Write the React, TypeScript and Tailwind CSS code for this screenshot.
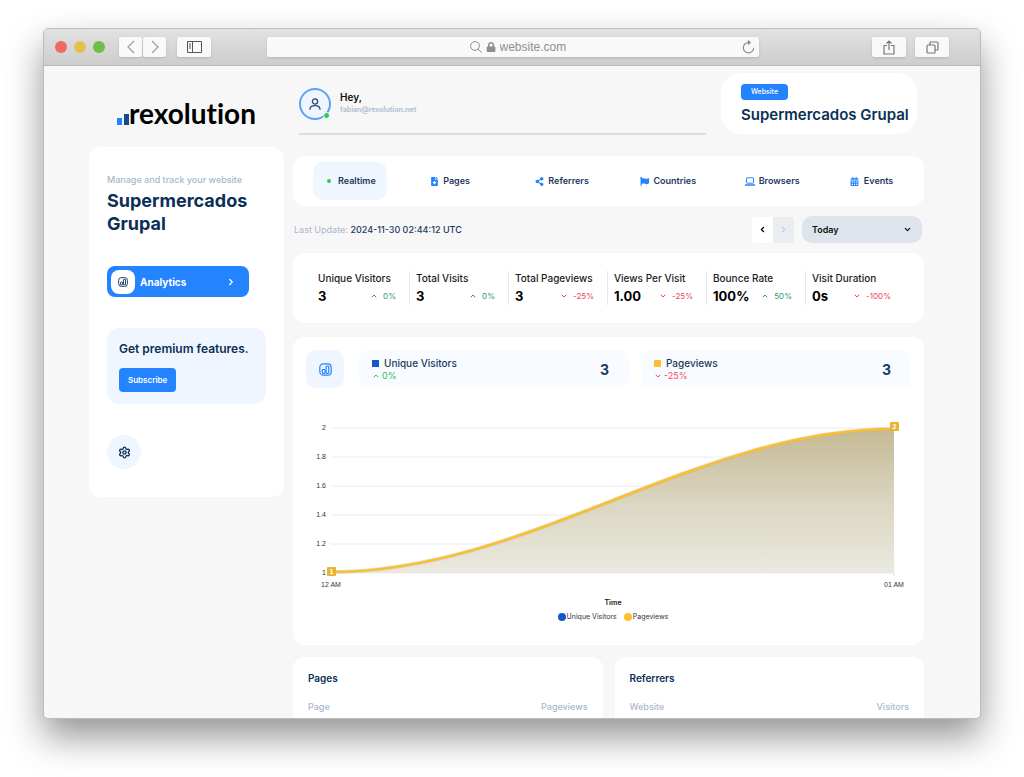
import React, { useState } from "react";
import { ChevronDown, ChevronLeft, ChevronRight, ChevronUp, Settings } from "lucide-react";
import { FaCalendarAlt, FaFileMedical, FaFlag, FaLock, FaShareAlt } from "react-icons/fa";

type Trend = { up: boolean; value: string };
type Stat = { label: string; value: string; trend: Trend };

const TABS = [
  { id: "realtime", label: "Realtime", icon: <span className="h-1 w-1 rounded-full bg-[#34c759]" /> },
  { id: "pages", label: "Pages", icon: <FaFileMedical size={9} /> },
  { id: "referrers", label: "Referrers", icon: <FaShareAlt size={9} /> },
  { id: "countries", label: "Countries", icon: <FlagIcon /> },
  { id: "browsers", label: "Browsers", icon: <LaptopIcon /> },
  { id: "events", label: "Events", icon: <FaCalendarAlt size={9} /> },
];

const STATS: Stat[] = [
  { label: "Unique Visitors", value: "3", trend: { up: true, value: "0%" } },
  { label: "Total Visits", value: "3", trend: { up: true, value: "0%" } },
  { label: "Total Pageviews", value: "3", trend: { up: false, value: "-25%" } },
  { label: "Views Per Visit", value: "1.00", trend: { up: false, value: "-25%" } },
  { label: "Bounce Rate", value: "100%", trend: { up: true, value: "50%" } },
  { label: "Visit Duration", value: "0s", trend: { up: false, value: "-100%" } },
];

const Y_TICKS = ["2", "1.8", "1.6", "1.4", "1.2", "1"];

function FlagIcon() {
  return <FaFlag size={9} />;
}

function LaptopIcon() {
  return (
    <svg width="10" height="9" viewBox="0 0 10 9" fill="none" stroke="currentColor" aria-hidden="true">
      <rect x="1.5" y=".8" width="7" height="5.400" rx=".5" />
      <path d="M0 8h10" strokeWidth="1.400" />
    </svg>
  );
}

function BarsIcon({ size }: { size: number }) {
  return (
    <svg width={size} height={size} viewBox="0 0 24 24" fill="none" stroke="currentColor" strokeWidth="2.200" strokeLinejoin="round" aria-hidden="true">
      <rect x="1.5" y="1.5" width="21" height="21" rx="6.5" />
      <rect x="6" y="12" width="5" height="7" rx="1.5" />
      <rect x="13" y="5.5" width="5" height="13.5" rx="1.5" />
    </svg>
  );
}

function TitleBar() {
  return (
    <header className="flex h-[37px] items-center border-b border-[#b9b9b9] bg-linear-to-b from-[#e2e2e2] to-[#cdcdcd] pl-[11px] pr-[31px]">
      <div className="flex gap-[7px]">
        <span className="h-3 w-3 rounded-full bg-[#ee6a5e]" />
        <span className="h-3 w-3 rounded-full bg-[#e2c04c]" />
        <span className="h-3 w-3 rounded-full bg-[#70bf45]" />
      </div>
      <div className="ml-[14px] flex gap-px text-[#a0a0a0]">
        <button type="button" aria-label="Back" className="flex h-5 w-[23px] items-center justify-center rounded-[2px] bg-[#f9f9f9] shadow-sm">
          <svg width="8" height="14" viewBox="0 0 8 14" fill="none" stroke="currentColor" strokeWidth="1.3"><path d="M7 1 1 7l6 6" /></svg>
        </button>
        <button type="button" aria-label="Forward" className="flex h-5 w-[23px] items-center justify-center rounded-[2px] bg-[#f9f9f9] shadow-sm">
          <svg width="8" height="14" viewBox="0 0 8 14" fill="none" stroke="currentColor" strokeWidth="1.3"><path d="m1 1 6 6-6 6" /></svg>
        </button>
      </div>
      <button type="button" aria-label="Show sidebar" className="ml-[11px] flex h-5 w-[34px] items-center justify-center rounded-[2px] bg-[#f9f9f9] text-[#555] shadow-sm">
        <svg width="15" height="12" viewBox="0 0 15 12" fill="none" stroke="currentColor"><path d="M.5.5h14v11H.5zM5.500.5v11M2 3h2M2 5h2M2 7h2" /></svg>
      </button>
      <div className="ml-14 flex h-5 flex-1 items-center rounded-[2px] bg-[#f9f9f9] pl-7 pr-1 text-[#8e8e8e] shadow-sm">
        <div className="flex flex-1 items-center justify-center">
          <svg width="12" height="12" viewBox="0 0 12 12" fill="none" stroke="currentColor"><circle cx="5" cy="5" r="4.400" /><path d="m8.200 8.200 3.500 3.500" /></svg>
          <FaLock size={10} className="ml-1 mr-1" />
          <input aria-label="Address" defaultValue="website.com" className="w-[68px] bg-transparent font-['Liberation_Sans',sans-serif] text-[12px] leading-4 outline-none" />
        </div>
        <button type="button" aria-label="Reload">
          <svg width="13" height="14" viewBox="0 0 13 14" fill="none" stroke="currentColor" strokeWidth="1.200"><path d="M6.500 2.500a5.200 5.200 0 1 0 5.200 5.200" /><path d="m6 .3 3 2.300-3 2.200z" fill="currentColor" strokeWidth=".5" /></svg>
        </button>
      </div>
      <div className="ml-[113px] flex gap-[9px] text-[#777]">
        <button type="button" aria-label="Share" className="flex h-5 w-[34px] items-center justify-center rounded-[2px] bg-[#f9f9f9] shadow-sm">
          <svg width="12" height="15" viewBox="0 0 12 15" fill="none" stroke="currentColor" strokeWidth="1.200"><path d="M4 5.500H1V14h10V5.500H8M6 10V1M3.500 3.500 6 1l2.500 2.500" /></svg>
        </button>
        <button type="button" aria-label="Show tabs" className="flex h-5 w-[34px] items-center justify-center rounded-[2px] bg-[#f9f9f9] shadow-sm">
          <svg width="13" height="13" viewBox="0 0 13 13" fill="none" stroke="currentColor" strokeWidth="1.200"><rect x="1" y="4" width="8" height="8" rx="1" /><path d="M4 4V2a1 1 0 0 1 1-1h6a1 1 0 0 1 1 1v6a1 1 0 0 1-1 1H9" /></svg>
        </button>
      </div>
    </header>
  );
}

function Sidebar() {
  return (
    <aside>
      <div className="flex h-[81px] items-end pb-[18px] pl-7">
        <svg width="12" height="12" viewBox="0 0 12 12" className="mb-1" aria-hidden="true">
          <rect x="0" y="5" width="5" height="7" fill="#2483ff" />
          <rect x="7" y="1" width="5" height="11" fill="#174a8c" />
        </svg>
        <span className="font-['Lato',sans-serif] text-[28px] font-bold leading-8 text-black [font-variant-ligatures:none]">rexolution</span>
      </div>
      <div className="rounded-xl bg-white px-[18px] pb-7 pt-[26px]">
        <p className="text-[9px] font-medium leading-[14px] text-[#a9b8cc]">Manage and track your website</p>
        <h1 className="mt-[2px] text-[18px] font-bold leading-[23px] text-[#0b2f55]">Supermercados Grupal</h1>
        <a href="#analytics" className="mr-[17px] mt-[31px] flex h-[31px] items-center rounded-lg bg-[#2483ff] px-1 text-white">
          <span className="flex h-6 w-6 items-center justify-center rounded-lg bg-white text-[#0b2f55]">
            <BarsIcon size={10} />
          </span>
          <span className="ml-[5px] flex-1 text-[10px] font-bold leading-4">Analytics</span>
          <ChevronRight size={10} strokeWidth={3} className="mr-[9px]" />
        </a>
        <div className="mt-[31px] rounded-xl bg-[#eff6ff] px-3 py-3">
          <h2 className="text-[12px] font-semibold leading-[18px] text-[#0b2f55]">Get premium features.</h2>
          <button type="button" className="mt-[10px] h-6 rounded-[4px] bg-[#2483ff] px-[9px] text-[8px] font-semibold text-white">Subscribe</button>
        </div>
        <button type="button" aria-label="Settings" className="mt-[31px] flex h-[34px] w-[34px] items-center justify-center rounded-full bg-[#eff6ff] text-[#0b2f55]">
          <Settings size={13} strokeWidth={2.5} />
        </button>
      </div>
    </aside>
  );
}

function UserHeader() {
  return (
    <div className="flex items-start pl-[6px] pr-[7px] pt-[7px]">
      <div className="mr-[15px] flex h-[62px] flex-1 items-start border-b-2 border-[#d8dee5] pt-[15px]">
        <div className="relative flex h-8 w-8 items-center justify-center rounded-full border-2 border-[#5aa2f8] bg-[#eff6ff] text-[#2b4a70]">
          <svg width="12" height="12" viewBox="0 0 12 12" fill="none" stroke="currentColor" strokeWidth="1.300" strokeLinecap="round"><circle cx="6" cy="3.500" r="2.600" /><path d="M1 11.300c0-5 10-5 10 0" /></svg>
          <span className="absolute -bottom-px -right-px h-[7px] w-[7px] rounded-full border border-white bg-[#34c759]" />
        </div>
        <div className="ml-[9px] pt-[2px]">
          <p className="text-[10px] font-semibold leading-[14px] text-[#111]">Hey,</p>
          <p className="text-[7px] font-bold leading-3 text-[#b4c1d2]">fabian@rexolution.net</p>
        </div>
      </div>
      <div className="w-[196px] rounded-[20px] bg-white px-5 pb-2 pt-[11px]">
        <div className="flex h-4 w-[47px] items-center justify-center rounded-[4px] bg-[#2483ff] text-[7px] font-medium text-white">Website</div>
        <p className="mt-1 whitespace-nowrap text-[15px] font-semibold leading-[22px] text-[#0b2f55]">Supermercados Grupal</p>
      </div>
    </div>
  );
}

function TrendArrow({ up }: { up: boolean }) {
  return up ? <ChevronUp size={8} strokeWidth={3} /> : <ChevronDown size={8} strokeWidth={3} />;
}

function StatsCard() {
  return (
    <section className="mt-[10px] grid grid-cols-6 rounded-xl bg-white py-[18px] pl-[17px] pr-5">
      {STATS.map((s, i) => (
        <div key={s.label} className={i === 0 ? "h-[34px] pl-2 pr-[13px]" : "h-[34px] border-l border-[#e4e8ed] pl-[6px] pr-[13px]"}>
          <p className="whitespace-nowrap text-[10px] font-medium leading-[14px] text-[#1c1c1c]">{s.label}</p>
          <div className="mt-[2px] flex items-center justify-between">
            <span className="text-[13px] font-bold leading-[18px] text-black">{s.value}</span>
            <span className={s.trend.up ? "flex items-center gap-[5px] text-[8px] text-[#2e9a63]" : "flex items-center gap-[5px] text-[8px] text-[#e8485a]"}>
              <TrendArrow up={s.trend.up} />
              {s.trend.value}
            </span>
          </div>
        </div>
      ))}
    </section>
  );
}

function Series({ label, swatch, trend, total }: { label: string; swatch: string; trend: Trend; total: string }) {
  return (
    <div className="flex h-[38px] flex-1 items-center justify-between rounded-[10px] bg-[#f8fbff] pl-[13px] pr-5">
      <div>
        <p className="flex items-center gap-[5px] text-[10px] font-medium leading-[13px] text-[#1c3a5e]">
          <span className={swatch} />
          {label}
        </p>
        <p className={trend.up ? "flex items-center gap-[2px] text-[9px] leading-3 text-[#2fc252]" : "flex items-center gap-[2px] text-[9px] leading-3 text-[#fb4d5b]"}>
          <TrendArrow up={trend.up} />
          {trend.value}
        </p>
      </div>
      <span className="text-[14px] font-bold text-[#1c3a5e]">{total}</span>
    </div>
  );
}

function VisitsChart() {
  return (
    <svg viewBox="0 0 605 194" className="mt-3 block w-full font-['Liberation_Sans',sans-serif]" role="img" aria-label="Visitors and pageviews over time">
      <defs>
        <linearGradient id="area" x1="0" y1="0" x2="0" y2="1">
          <stop offset="0" stopColor="#bfb289" />
          <stop offset=".5" stopColor="#d6d1b9" />
          <stop offset="1" stopColor="#e8e7dc" />
        </linearGradient>
      </defs>
      {Y_TICKS.map((tick, i) => (
        <g key={tick}>
          <line x1="25" x2="588" y1={28 + i * 29} y2={28 + i * 29} stroke="#ececec" />
          <text x="20" y={30 + i * 29} textAnchor="end" fontSize="7" fill="#333">{tick}</text>
        </g>
      ))}
      <path d="M25 173C222 173 391 29 588 29V173Z" fill="url(#area)" fillOpacity=".9" />
      <path d="M588 173v3" stroke="#ddd" />
      <path d="M25 172C222 172 391 29 588 29" fill="none" stroke="#b9b5a0" strokeWidth="4" strokeOpacity=".4" />
      <path d="M25 172C222 172 391 29 588 29" fill="none" stroke="#fbbf2d" strokeWidth="2.500" />
      <g fontSize="7" fontWeight="bold" fill="#fff" textAnchor="middle">
        <rect x="21" y="167" width="9" height="9" rx="1" fill="#e6b535" />
        <text x="25.500" y="174">1</text>
        <rect x="584" y="22" width="9" height="9" rx="1" fill="#e6b535" />
        <text x="588.500" y="29">2</text>
      </g>
      <g fontSize="7" fill="#333" textAnchor="middle">
        <text x="25" y="187">12 AM</text>
        <text x="588" y="187">01 AM</text>
      </g>
    </svg>
  );
}

function ChartCard() {
  return (
    <section className="mt-[14px] rounded-xl bg-white px-[13px] pb-[22px] pt-[13px]">
      <div className="flex items-center gap-3">
        <div className="mr-[3px] flex h-[38px] w-[38px] items-center justify-center rounded-[10px] bg-[#eff6ff] text-[#2483ff]">
          <BarsIcon size={13} />
        </div>
        <Series label="Unique Visitors" swatch="h-[7px] w-[7px] bg-[#1658cc]" trend={{ up: true, value: "0%" }} total="3" />
        <Series label="Pageviews" swatch="h-[7px] w-[7px] rounded-[1px] bg-[#fdbf2d]" trend={{ up: false, value: "-25%" }} total="3" />
      </div>
      <VisitsChart />
      <div className="pl-[9px] pt-[2px] text-center text-[7px] text-[#333]">
        <p className="font-bold leading-[14px]">Time</p>
        <div className="flex items-center justify-center gap-[7px] leading-[13px]">
          <span className="flex items-center gap-px"><i className="h-2 w-2 rounded-full bg-[#1658cc]" />Unique Visitors</span>
          <span className="flex items-center gap-px"><i className="h-2 w-2 rounded-full bg-[#fdbf2d]" />Pageviews</span>
        </div>
      </div>
    </section>
  );
}

function TableCard({ title, columns }: { title: string; columns: [string, string] }) {
  return (
    <section className="min-h-[100px] rounded-xl bg-white px-[15px] pt-[14px]">
      <h2 className="text-[10px] font-semibold leading-[14px] text-[#0b2f55]">{title}</h2>
      <table className="mt-[15px] w-full text-[9px] leading-[14px] text-[#a9b8cc]">
        <thead>
          <tr>
            <th className="text-left font-medium">{columns[0]}</th>
            <th className="text-right font-medium">{columns[1]}</th>
          </tr>
        </thead>
      </table>
    </section>
  );
}

export default function App() {
  const [tab, setTab] = useState("realtime");

  return (
    <div className="h-screen overflow-hidden bg-white px-[43px] pb-[58px] pt-[28px] font-['Inter',sans-serif]">
      <div className="flex h-full flex-col overflow-hidden rounded-[5px] border border-[#bdbdbd] bg-[#f7f7f7] shadow-[0_18px_36px_rgba(0,0,0,0.42)]">
        <TitleBar />
        <div className="grid min-h-0 flex-1 grid-cols-[195px_1fr] gap-[9px] pl-[45px] pr-14">
          <Sidebar />
          <main>
            <UserHeader />

            <nav className="mt-[21px] grid grid-cols-6 rounded-xl bg-white py-[6px]">
              {TABS.map((t) => (
                <div key={t.id} className="pl-5">
                  <button
                    type="button"
                    onClick={() => setTab(t.id)}
                    className={tab === t.id
                      ? "flex h-[38px] items-center gap-1 rounded-[10px] bg-[#eff6ff] px-[11px] text-[9px] font-semibold text-[#1c3a5e]"
                      : "flex h-[38px] items-center gap-1 rounded-[10px] px-[11px] text-[9px] font-semibold text-[#1c3a5e]"}
                  >
                    <span className="flex w-[10px] items-center justify-center text-[#2483ff]">{t.icon}</span>
                    {t.label}
                  </button>
                </div>
              ))}
            </nav>

            <div className="mt-[10px] flex h-[27px] items-center pr-[2px] text-[9px]">
              <p className="flex-1 pl-px text-[#a9b8cc]">
                Last Update: <span className="font-medium text-[#1c3a5e]">2024-11-30 02:44:12 UTC</span>
              </p>
              <button type="button" aria-label="Previous day" className="flex h-[26px] w-[21px] items-center justify-center rounded-l-[2px] bg-white text-black">
                <ChevronLeft size={9} strokeWidth={3} />
              </button>
              <button type="button" aria-label="Next day" disabled className="flex h-[26px] w-[21px] items-center justify-center rounded-r-[2px] bg-[#e9edf2] text-[#c5ccd4]">
                <ChevronRight size={9} strokeWidth={3} />
              </button>
              <div className="relative ml-2">
                <select aria-label="Period" className="h-[27px] w-[120px] appearance-none rounded-[10px] bg-[#dee4ec] pl-[10px] text-[9px] font-semibold text-[#111]">
                  <option>Today</option>
                </select>
                <ChevronDown size={9} strokeWidth={3} className="pointer-events-none absolute right-[10px] top-[9px]" />
              </div>
            </div>

            <StatsCard />
            <ChartCard />

            <div className="mt-3 grid grid-cols-2 gap-3">
              <TableCard title="Pages" columns={["Page", "Pageviews"]} />
              <TableCard title="Referrers" columns={["Website", "Visitors"]} />
            </div>
          </main>
        </div>
      </div>
    </div>
  );
}
